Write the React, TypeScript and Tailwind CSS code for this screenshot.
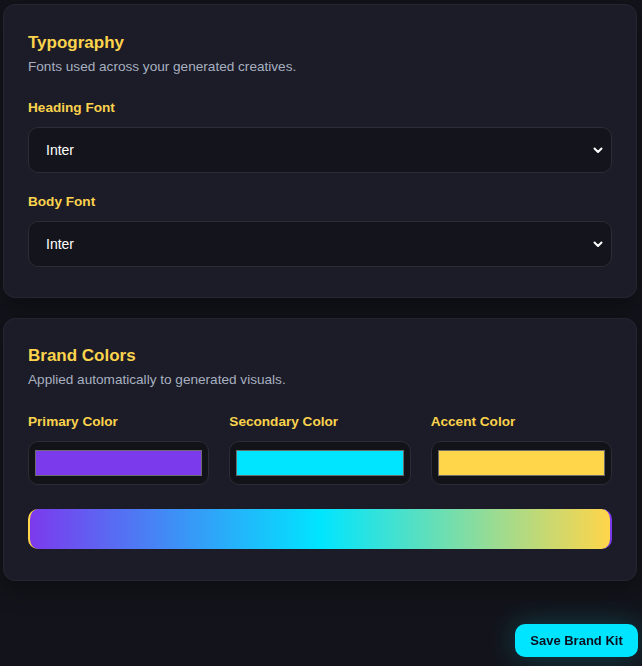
import { useState } from "react";

const fonts = ["Inter", "Roboto", "Open Sans", "Lato", "Noto Sans"];

const Chevron = () => (
  <svg className="pointer-events-none absolute right-[8px] top-1/2 h-[12px] w-[12px] -translate-y-1/2" viewBox="0 0 12 12" fill="none">
    <path d="M2.5 4.5L6 8l3.5-3.5" stroke="#ffffff" strokeWidth={2} strokeLinecap="round" strokeLinejoin="round" />
  </svg>
);

const FontSelect = ({ label, value, onChange }: { label: string; value: string; onChange: (v: string) => void }) => (
  <div>
    <label className="block text-[13.6px] font-bold leading-[18px] text-[#fcd34d]">{label}</label>
    <div className="relative mt-[10px]">
      <select
        value={value}
        onChange={(e) => onChange(e.target.value)}
        className="h-[46px] w-full appearance-none rounded-[10px] border border-[#2b2c36] bg-[#14141c] pl-[17px] text-[14px] text-white outline-none"
      >
        {fonts.map((f) => (
          <option key={f}>{f}</option>
        ))}
      </select>
      <Chevron />
    </div>
  </div>
);

const ColorField = ({ label, color }: { label: string; color: string }) => (
  <div>
    <label className="block text-[13.6px] font-bold leading-[18px] text-[#fcd34d]">{label}</label>
    <div className="mt-[10px] rounded-[10px] border border-[#2b2c36] bg-[#121219] px-[6px] py-[8px]">
      <div className="h-[26px] border border-[#6b6b6b]" style={{ backgroundColor: color }} />
    </div>
  </div>
);

export default function App() {
  const [heading, setHeading] = useState("Inter");
  const [body, setBody] = useState("Inter");
  const primary = "#7c3aed";
  const secondary = "#00e5ff";
  const accent = "#ffd54a";

  return (
    <div className="min-h-[666px] bg-[#13141b] pt-[4px] font-['Liberation_Sans',Arial,sans-serif]">
      {/* Typography */}
      <section className="ml-[3px] w-[634px] rounded-[12px] border border-[#252631] bg-[#1b1c27] px-6 pt-6 pb-[30px] shadow-[0_8px_24px_rgba(0,0,0,0.35)]">
        <h2 className="text-[17px] font-bold leading-[28px] text-[#fcd34d]">Typography</h2>
        <p className="text-[13.6px] leading-[20px] text-[#a8b0c0]">Fonts used across your generated creatives.</p>
        <div className="mt-[22px] flex flex-col gap-[20px]">
          <FontSelect label="Heading Font" value={heading} onChange={setHeading} />
          <FontSelect label="Body Font" value={body} onChange={setBody} />
        </div>
      </section>

      {/* Brand colors */}
      <section className="mt-5 ml-[3px] w-[634px] rounded-[12px] border border-[#252631] bg-[#1b1c27] px-6 pt-[23px] pb-[31px] shadow-[0_8px_24px_rgba(0,0,0,0.35)]">
        <h2 className="text-[17px] font-bold leading-[28px] text-[#fcd34d]">Brand Colors</h2>
        <p className="text-[13.6px] leading-[20px] text-[#a8b0c0]">Applied automatically to generated visuals.</p>
        <div className="mt-[23px] grid grid-cols-3 gap-5">
          <ColorField label="Primary Color" color={primary} />
          <ColorField label="Secondary Color" color={secondary} />
          <ColorField label="Accent Color" color={accent} />
        </div>
        <div
          className="mt-6 h-[40px] rounded-[10px] border-l-2 border-r-2 border-l-[#ffd54a] border-r-[#7c3aed]"
          style={{ background: `linear-gradient(90deg, ${primary}, ${secondary}, ${accent})` }}
        />
      </section>

      <button className="fixed right-[4px] bottom-[9px] h-[33px] w-[123px] rounded-[10px] bg-[#00e5ff] text-[13px] font-bold text-[#0b1020] shadow-[0_0_28px_rgba(0,229,255,0.22)]">
        Save Brand Kit
      </button>
    </div>
  );
}
